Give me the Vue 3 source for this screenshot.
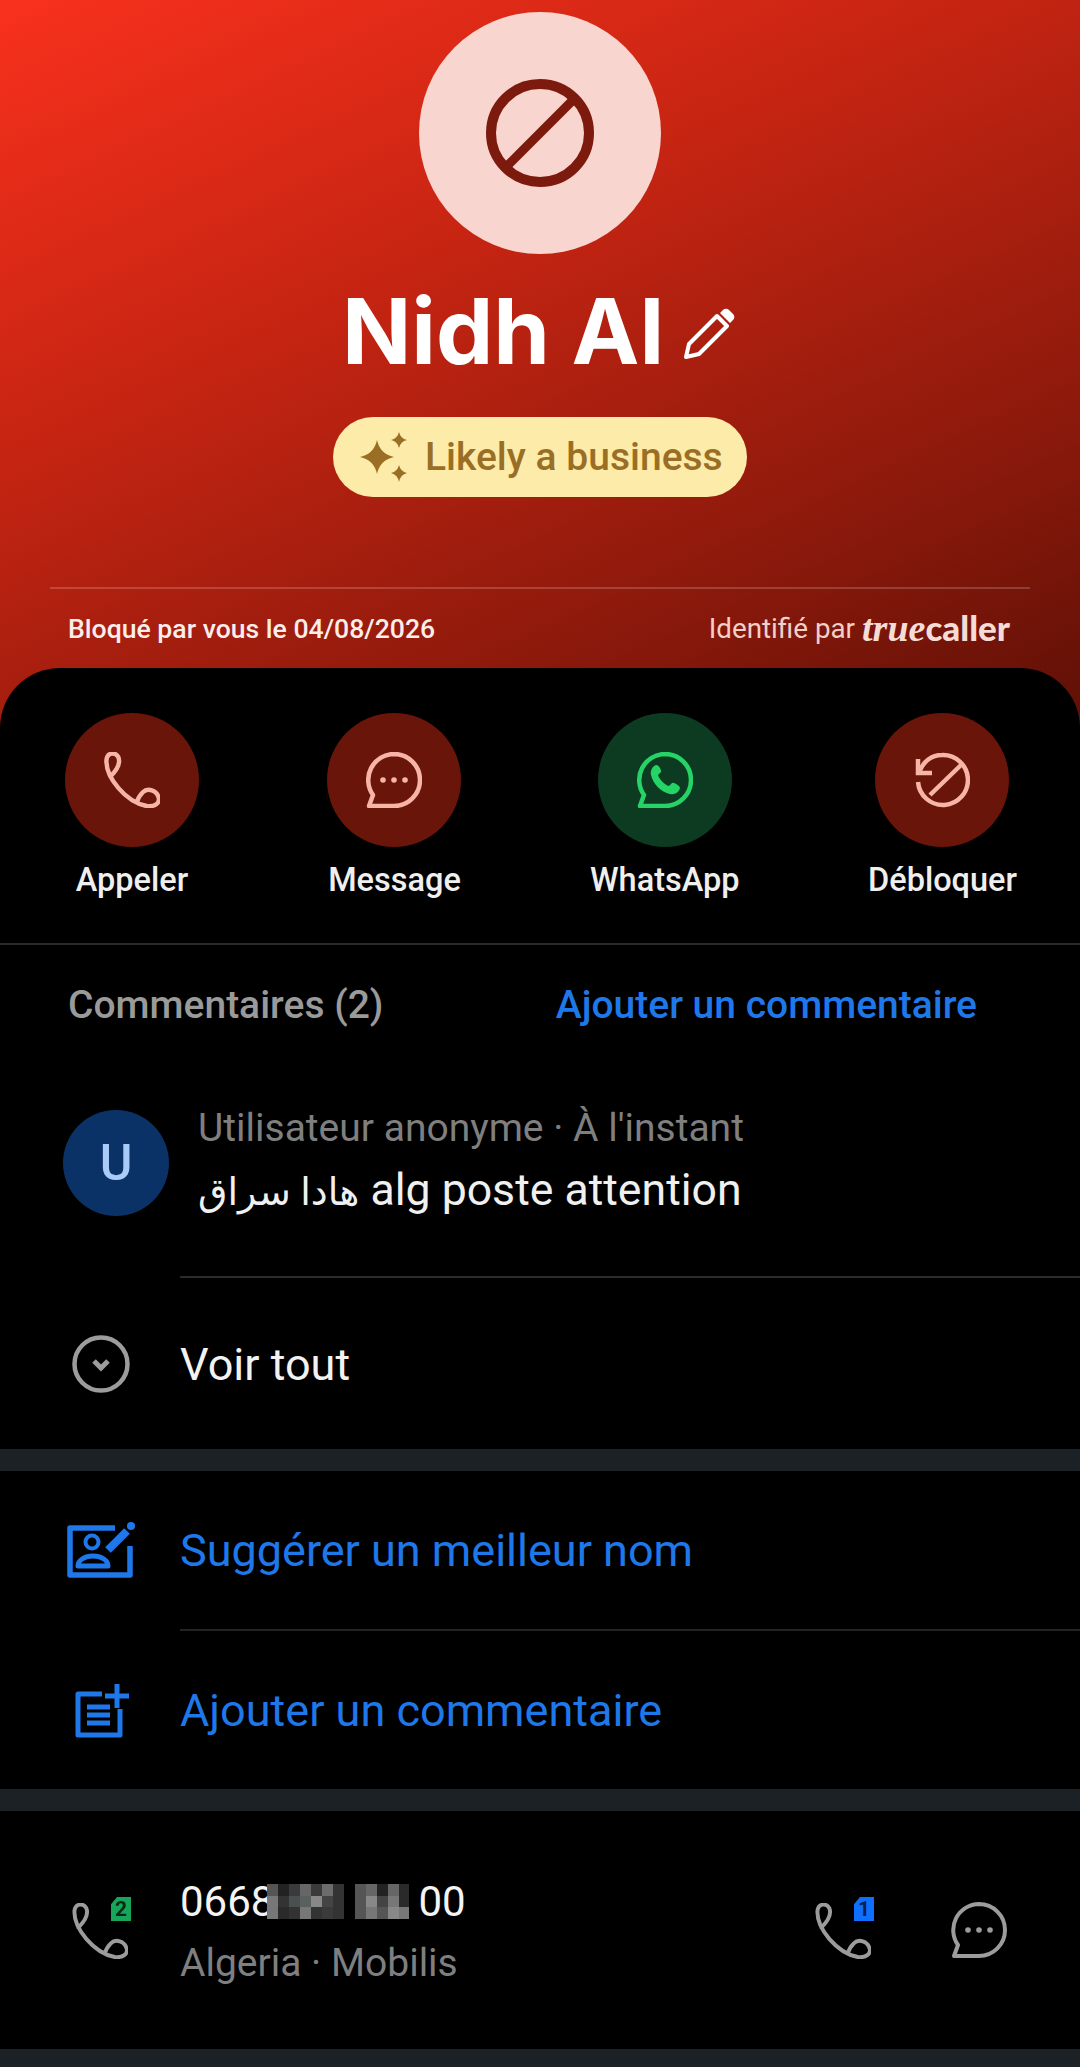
<script setup>
const actions = [
  { label: 'Appeler', icon: 'phone' },
  { label: 'Message', icon: 'message' },
  { label: 'WhatsApp', icon: 'whatsapp', green: true },
  { label: 'Débloquer', icon: 'unblock' }
]

const phonePath =
  'M6 25C11 20 17 12 14 5C11 0 3 0 2 8C1 26 22 51 43 55C51 56 57 52 55 46C53 39 44 36 39 41C36 44 34 47 33 51'
const bubblePath = 'M28 2A26 26 0 1 1 28 54H3L7 43A26 26 0 0 1 28 2Z'

// blurred part of the number, column by column
const blurLeft = [
  '#555', '#222', '#3a3a3a', '#666', '#3a3a3a', '#6c6c6c', '#333',
  '#777', '#333', '#4a5050', '#5a6060', '#888', '#444', '#333',
  '#777', '#2a2a2a', '#333', '#777', '#333', '#3a3a3a', '#333'
]
const blurRight = [
  '#555', '#666', '#222', '#666', '#2a2a2a',
  '#555', '#888', '#444', '#777', '#2a2a2a',
  '#555', '#777', '#555', '#888', '#777'
]
</script>

<template>
  <div class="page">
    <header class="hero">
      <div class="avatar">
        <svg class="block-icon" viewBox="0 0 110 110" fill="none">
          <circle cx="55" cy="55" r="49" stroke="#7c1a0e" stroke-width="10" />
          <path d="M90 20L20 90" stroke="#7c1a0e" stroke-width="9" />
        </svg>
      </div>
      <div class="name-row">
        <span class="name">Nidh Al</span>
        <svg class="pencil" viewBox="0 0 52 52" fill="none">
          <path d="M2 50L5 37L33 9L43 19L15 47Z" stroke="#fff" stroke-width="4" stroke-linejoin="round" />
          <path d="M36 6L39 3A4 4 0 0 1 45 3L49 7A4 4 0 0 1 49 13L46 16Z" fill="#fff" />
        </svg>
      </div>
      <div class="pill">
        <svg class="sparkle" viewBox="0 0 48 50" fill="#9a6f25">
          <path d="M17 8Q20 22 34 25Q20 28 17 42Q14 28 0 25Q14 22 17 8Z" />
          <path d="M39 0Q40.500 6.500 47 8Q40.500 9.500 39 16Q37.500 9.500 31 8Q37.500 6.500 39 0Z" />
          <path d="M39 33Q40.500 39.500 47 41Q40.500 42.500 39 50Q37.500 42.500 31 41Q37.500 39.500 39 33Z" />
        </svg>
        <span>Likely a business</span>
      </div>
      <div class="hero-line"></div>
      <div class="hero-foot">
        <span class="blocked">Bloqué par vous le 04/08/2026</span>
        <span class="identified">
          Identifié par
          <span class="brand"><i>true</i>caller</span>
        </span>
      </div>
    </header>

    <main class="sheet">
      <section class="actions">
        <div class="action" v-for="item in actions" :key="item.label">
          <div class="action-circle" :class="{ green: item.green }">
            <svg v-if="item.icon === 'phone'" class="action-icon" viewBox="0 0 56 57" fill="none">
              <path :d="phonePath" stroke="#f7b5a8" stroke-width="4.500" stroke-linecap="round" />
            </svg>
            <svg v-else-if="item.icon === 'message'" class="action-icon" viewBox="0 0 56 56" fill="none">
              <path :d="bubblePath" stroke="#f7b5a8" stroke-width="4.500" stroke-linejoin="round" />
              <circle cx="17" cy="28" r="2.800" fill="#f7b5a8" />
              <circle cx="28" cy="28" r="2.800" fill="#f7b5a8" />
              <circle cx="39" cy="28" r="2.800" fill="#f7b5a8" />
            </svg>
            <svg v-else-if="item.icon === 'whatsapp'" class="action-icon" viewBox="0 0 56 56" fill="none">
              <path :d="bubblePath" stroke="#25d366" stroke-width="4.500" stroke-linejoin="round" />
              <path d="M19 13C16 14 13 18 14 23C16 32 24 40 33 42C38 43 42 40 43 36C43 34 37 30 35 31L32 34C28 33 22 27 21 23L24 20C25 18 21 12 19 13Z" fill="#25d366" />
            </svg>
            <svg v-else class="action-icon" viewBox="0 0 56 56" fill="none">
              <path d="M5 21C9 9 18 3 28 3A25 25 0 1 1 4 30" stroke="#f7b5a8" stroke-width="4.500" />
              <path d="M4 7V21H18" stroke="#f7b5a8" stroke-width="4.500" />
              <path d="M47 13L16 43" stroke="#f7b5a8" stroke-width="4.500" />
            </svg>
          </div>
          <span class="action-label">{{ item.label }}</span>
        </div>
      </section>

      <section class="comments">
        <div class="comments-head">
          <span class="comments-title">Commentaires (2)</span>
          <span class="comments-add">Ajouter un commentaire</span>
        </div>
        <div class="comment">
          <div class="comment-avatar">U</div>
          <div class="comment-body">
            <div class="comment-meta">Utilisateur anonyme · À l'instant</div>
            <div class="comment-text"><span class="arabic">هادا سراق</span> alg poste attention</div>
          </div>
        </div>
        <div class="row row-see">
          <div class="row-icon">
            <svg class="chevron" viewBox="0 0 58 58" fill="none">
              <circle cx="29" cy="29" r="26.500" stroke="#9c9c9c" stroke-width="4.500" />
              <path d="M22 26L29 33L36 26" stroke="#9c9c9c" stroke-width="5" />
            </svg>
          </div>
          <div class="row-text see-text">Voir tout</div>
        </div>
      </section>

      <div class="gap-bar"></div>

      <section>
        <div class="row row-link">
          <div class="row-icon">
            <svg class="suggest-icon" viewBox="0 0 68 56" fill="none">
              <path d="M48 6H3V53H63V24" stroke="#1f78ea" stroke-width="5.500" stroke-linejoin="round" />
              <circle cx="25" cy="20" r="6.500" stroke="#1f78ea" stroke-width="4" />
              <path d="M11 44C11 38 18 34 26 34C34 34 41 38 41 44Z" stroke="#1f78ea" stroke-width="5" stroke-linejoin="round" />
              <path d="M41 28L60 9" stroke="#1f78ea" stroke-width="8" />
              <circle cx="64" cy="4" r="4" fill="#1f78ea" />
            </svg>
          </div>
          <div class="row-text link">Suggérer un meilleur nom</div>
        </div>
        <div class="row row-link second">
          <div class="row-icon">
            <svg class="add-icon" viewBox="0 0 56 55" fill="none">
              <path d="M27 11H3V52H45V26" stroke="#1f78ea" stroke-width="5" stroke-linejoin="round" />
              <path d="M12 24H35M12 32H35M12 40H35" stroke="#1f78ea" stroke-width="5" />
              <path d="M42 1V25M30 13H54" stroke="#1f78ea" stroke-width="5" />
            </svg>
          </div>
          <div class="row-text link">Ajouter un commentaire</div>
        </div>
      </section>

      <div class="gap-bar"></div>

      <section class="number-row">
        <div class="row-icon">
          <div class="call-icon">
            <svg class="call-svg" viewBox="0 0 56 57" fill="none">
              <path :d="phonePath" stroke="#9c9c9c" stroke-width="4" stroke-linecap="round" />
            </svg>
            <span class="sim sim-green">2</span>
          </div>
        </div>
        <div class="number-info">
          <div class="number">
            <span>0668</span>
            <div class="blur blur-left">
              <i v-for="(color, i) in blurLeft" :key="i" :style="{ background: color }"></i>
            </div>
            <div class="blur blur-right">
              <i v-for="(color, i) in blurRight" :key="i" :style="{ background: color }"></i>
            </div>
            <span class="number-end">00</span>
          </div>
          <div class="carrier">Algeria · Mobilis</div>
        </div>
        <div class="number-actions">
          <div class="call-icon">
            <svg class="call-svg" viewBox="0 0 56 57" fill="none">
              <path :d="phonePath" stroke="#9c9c9c" stroke-width="4" stroke-linecap="round" />
            </svg>
            <span class="sim sim-blue">1</span>
          </div>
          <svg class="msg-icon" viewBox="0 0 56 56" fill="none">
            <path :d="bubblePath" stroke="#9c9c9c" stroke-width="4" stroke-linejoin="round" />
            <circle cx="17" cy="28" r="2.800" fill="#9c9c9c" />
            <circle cx="28" cy="28" r="2.800" fill="#9c9c9c" />
            <circle cx="39" cy="28" r="2.800" fill="#9c9c9c" />
          </svg>
        </div>
      </section>

      <div class="gap-bar last"></div>
    </main>
  </div>
</template>

<style>
html,
body {
  margin: 0;
  background: #000;
}
</style>

<style scoped>
.page {
  width: 1080px;
  height: 2067px;
  overflow: hidden;
  background: #000;
  font-family: Roboto, "DejaVu Sans", sans-serif;
}
.hero {
  height: 728px;
  box-sizing: border-box;
  padding-top: 12px;
  display: flex;
  flex-direction: column;
  align-items: center;
  background: linear-gradient(155deg, #f8311d 0%, #c52412 38%, #8f1a0c 72%, #5f1006 100%);
}
.avatar {
  width: 242px;
  height: 242px;
  border-radius: 50%;
  background: #f8d5cf;
  display: flex;
  align-items: center;
  justify-content: center;
}
.block-icon {
  width: 110px;
  height: 110px;
}
.name-row {
  display: flex;
  align-items: center;
  gap: 20px;
  height: 100px;
  margin-top: 27px;
  margin-right: 2px;
}
.name {
  font-family: Inter, sans-serif;
  font-weight: 700;
  font-size: 91px;
  line-height: 100px;
  color: #fff;
}
.pencil {
  width: 52px;
  height: 52px;
  margin-top: 4px;
}
.pill {
  width: 414px;
  height: 80px;
  box-sizing: border-box;
  margin-top: 36px;
  padding-left: 27px;
  display: flex;
  align-items: center;
  gap: 17px;
  border-radius: 40px;
  background: #fdeba9;
  color: #9a6f25;
  font-size: 39px;
  font-weight: 500;
}
.sparkle {
  width: 48px;
  height: 50px;
}
.hero-line {
  width: 980px;
  height: 2px;
  margin-top: 90px;
  background: rgba(255, 255, 255, 0.18);
}
.hero-foot {
  width: 100%;
  box-sizing: border-box;
  padding: 0 70px 0 68px;
  margin-top: 19px;
  display: flex;
  justify-content: space-between;
  align-items: center;
  height: 40px;
  color: #f6e0db;
  font-size: 26.600px;
  font-weight: 500;
}
.blocked {
  color: #fbeeea;
}
.identified {
  display: flex;
  align-items: center;
  gap: 7px;
  font-size: 27.800px;
  font-weight: 400;
  color: #f2cfc8;
}
.brand {
  font-family: Lato, sans-serif;
  font-weight: 900;
  font-size: 35px;
  color: #f6dcd6;
}
.brand i {
  font-family: "Liberation Serif", serif;
  font-weight: 700;
  font-size: 38px;
}
.sheet {
  position: relative;
  margin-top: -60px;
  border-radius: 60px 60px 0 0;
  background: #000;
}
.actions {
  height: 277px;
  box-sizing: border-box;
  padding: 45px 63px 0 65px;
  display: flex;
  justify-content: space-between;
  align-items: flex-start;
  border-bottom: 2px solid #2b2b2b;
}
.action {
  display: flex;
  flex-direction: column;
  align-items: center;
}
.action-circle {
  width: 134px;
  height: 134px;
  border-radius: 50%;
  background: #691509;
  display: flex;
  align-items: center;
  justify-content: center;
}
.action-circle.green {
  background: #0c3b21;
}
.action-icon {
  width: 56px;
  height: 56px;
}
.action-label {
  margin-top: 15px;
  font-size: 32.500px;
  line-height: 36px;
  font-weight: 500;
  color: #efefef;
}
.comments-head {
  height: 120px;
  box-sizing: border-box;
  padding: 0 103px 0 68px;
  display: flex;
  align-items: center;
  justify-content: space-between;
  font-size: 39px;
  font-weight: 500;
}
.comments-title {
  color: #9a9a9a;
}
.comments-add {
  color: #1f78ea;
}
.comment {
  height: 213px;
  box-sizing: border-box;
  padding: 45px 0 0 63px;
  display: flex;
  align-items: flex-start;
  position: relative;
}
.comment::after {
  content: "";
  position: absolute;
  left: 180px;
  right: 0;
  bottom: 0;
  height: 2px;
  background: #2b2b2b;
}
.comment-avatar {
  width: 106px;
  height: 106px;
  border-radius: 50%;
  background: #0b3266;
  color: #a9cbf8;
  font-size: 50px;
  font-weight: 500;
  display: flex;
  align-items: center;
  justify-content: center;
  flex: none;
}
.comment-body {
  margin-left: 29px;
  margin-top: -3px;
}
.comment-meta {
  font-size: 39px;
  line-height: 42px;
  color: #7f7f7f;
}
.comment-text {
  margin-top: 18px;
  font-size: 44.600px;
  line-height: 46px;
  color: #f0f0f0;
}
.arabic {
  font-size: 38px;
}
.row {
  display: flex;
  align-items: center;
}
.row-icon {
  width: 180px;
  box-sizing: border-box;
  flex: none;
  padding-left: 72px;
  display: flex;
  align-items: center;
}
.row-see {
  height: 171px;
  box-sizing: border-box;
  padding-top: 1px;
}
.chevron {
  width: 58px;
  height: 58px;
}
.row-text {
  font-size: 45px;
}
.see-text {
  color: #f2f2f2;
}
.link {
  color: #1f78ea;
}
.gap-bar {
  height: 22px;
  background: #1c2125;
}
.gap-bar.last {
  height: 18px;
}
.row-link {
  height: 158px;
}
.row-link.second {
  height: 160px;
  box-sizing: border-box;
  padding-top: 3px;
  position: relative;
}
.row-link.second::before {
  content: "";
  position: absolute;
  top: 0;
  left: 180px;
  right: 0;
  height: 2px;
  background: #242424;
}
.suggest-icon {
  width: 68px;
  height: 56px;
  margin-left: -5px;
}
.add-icon {
  width: 56px;
  height: 55px;
  margin-left: 3px;
}
.number-row {
  height: 238px;
  display: flex;
  align-items: center;
  position: relative;
}
.call-icon {
  position: relative;
  width: 58px;
  height: 58px;
}
.call-svg {
  width: 56px;
  height: 56px;
  margin-top: 2px;
}
.sim {
  position: absolute;
  top: -4px;
  right: -1px;
  width: 20px;
  height: 24px;
  clip-path: polygon(30% 0, 100% 0, 100% 100%, 0 100%, 0 30%);
  font-size: 21px;
  line-height: 25px;
  font-weight: 700;
  text-align: center;
  color: #0a2a18;
}
.sim-green {
  background: #17a659;
}
.sim-blue {
  background: #0f6fff;
  color: #06234f;
}
.number-info {
  flex: 1;
}
.number {
  display: flex;
  align-items: center;
  font-size: 42px;
  line-height: 50px;
  color: #f4f4f4;
}
.blur {
  display: grid;
  grid-template-rows: repeat(3, 11.400px);
  grid-auto-columns: 11px;
}
.blur i {
  display: block;
}
.blur-left {
  width: 77px;
  grid-template-columns: repeat(7, 11px);
  margin-left: -7px;
}
.blur-right {
  width: 54px;
  grid-template-columns: repeat(5, 10.800px);
  margin-left: 11px;
}
.number-end {
  margin-left: 9px;
}
.carrier {
  margin-top: 15px;
  font-size: 39px;
  line-height: 42px;
  color: #7f7f7f;
}
.number-actions {
  display: flex;
  align-items: center;
  gap: 78px;
  padding-right: 73px;
}
.msg-icon {
  width: 56px;
  height: 56px;
}
</style>
